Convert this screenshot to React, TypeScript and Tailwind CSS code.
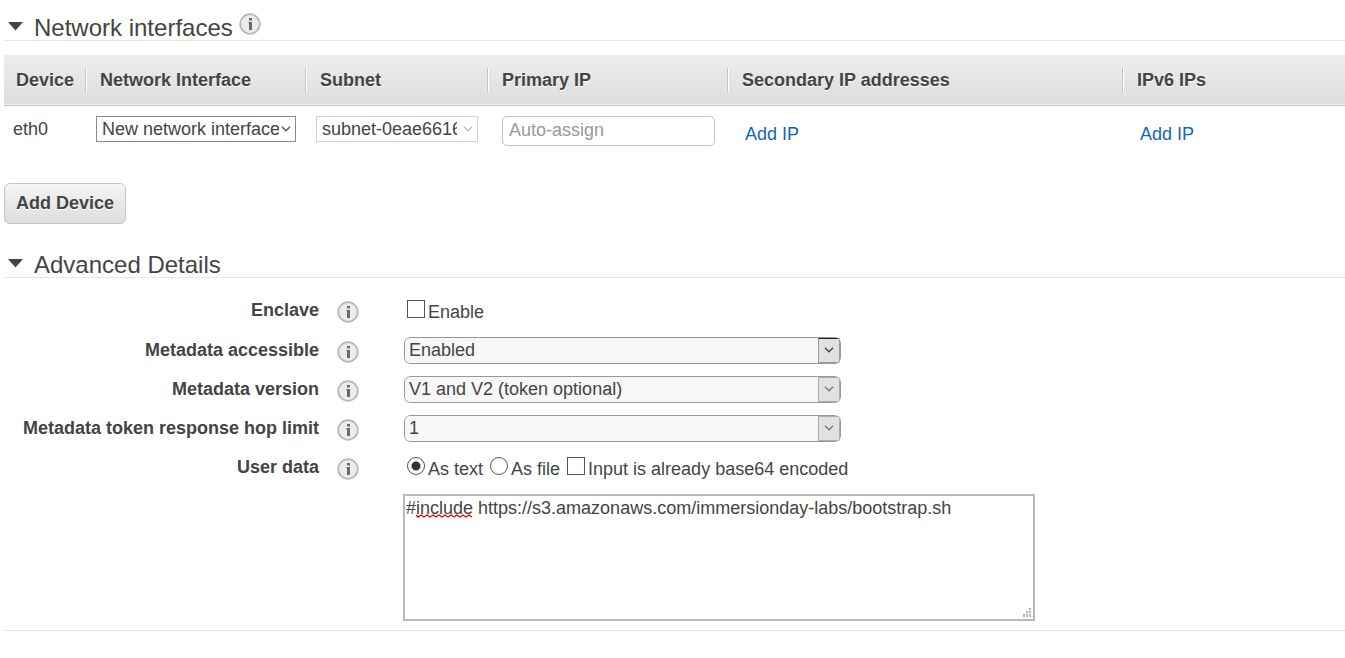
import React, { useState } from 'react';

const InfoIcon: React.FC = () => (
  <svg width="22" height="22" viewBox="0 0 22 22" aria-hidden="true">
    <circle cx="11" cy="11" r="9.8" fill="#ececec" stroke="#b8b8b8" strokeWidth="1.8" />
    <rect x="10" y="5" width="3" height="2.5" fill="#6a6a6a" />
    <path d="M9.4 9H13v8h-3v-6.8h-.6z" fill="#6a6a6a" />
  </svg>
);

const InfoButton: React.FC<{ label: string }> = ({ label }) => (
  <button type="button" aria-label={label} className="block h-[22px] w-[22px] shrink-0">
    <InfoIcon />
  </button>
);

const Chevron: React.FC<{ color: string }> = ({ color }) => (
  <svg width="10" height="6" viewBox="0 0 10 6" fill="none" stroke={color} strokeWidth="1.3" aria-hidden="true">
    <path d="M1 0.8 5 4.8 9 0.8" />
  </svg>
);

interface SectionTitleProps {
  title: string;
  open: boolean;
  info?: boolean;
  onToggle: () => void;
}

const SectionTitle: React.FC<SectionTitleProps> = ({ title, open, info, onToggle }) => (
  <div className="flex h-7 items-start border-b border-[#e8e8e8]">
    <button type="button" aria-expanded={open} onClick={onToggle} className="flex items-start text-2xl leading-[30px]">
      <svg width="30" height="28" viewBox="0 0 30 28" className="shrink-0" aria-hidden="true">
        <path d="M4 9h15l-7.5 8.5z" fill="#444" />
      </svg>
      <h2>{title}</h2>
    </button>
    {info && (
      <div className="ml-[6px]">
        <InfoButton label={`About ${title}`} />
      </div>
    )}
  </div>
);

const columns = [
  { name: 'Network Interface', width: 'w-[220px]' },
  { name: 'Subnet', width: 'w-[182px]' },
  { name: 'Primary IP', width: 'w-[240px]' },
  { name: 'Secondary IP addresses', width: 'w-[395px]' },
  { name: 'IPv6 IPs', width: '' },
];

const InterfacesTable: React.FC = () => (
  <table className="w-full table-fixed border-collapse text-left">
    <thead>
      <tr className="h-[50px] border-b border-[#c4c4c4] bg-linear-to-b from-[#eeeeee] to-[#dddddd] [text-shadow:0_1px_0_#fff]">
        <th className="w-[81px] p-0 pl-3">Device</th>
        {columns.map((col) => (
          <th key={col.name} className={`p-0 ${col.width}`}>
            <div className="border-l border-[#c4c4c4]">
              <div className="border-l border-white pl-[13px] leading-6">{col.name}</div>
            </div>
          </th>
        ))}
      </tr>
    </thead>
    <tbody>
      <tr className="align-top">
        <td className="p-0 pt-[11px] pl-[9px] leading-6">eth0</td>
        <td className="p-0 pt-[10px] pl-[11px]">
          <div className="relative w-[200px]">
            <select aria-label="Network interface" className="block h-[26px] w-full appearance-none border border-[#888] bg-white pr-4 pl-[5px]">
              <option>New network interface</option>
            </select>
            <span className="pointer-events-none absolute top-[10px] right-[5px]">
              <Chevron color="#555" />
            </span>
          </div>
        </td>
        <td className="p-0 pt-[10px] pl-[11px]">
          <div className="relative w-[162px]">
            <select aria-label="Subnet" className="block h-[26px] w-full appearance-none border border-[#d2d2d2] bg-white pr-5 pl-[5px]">
              <option>subnet-0eae6616</option>
            </select>
            <span className="pointer-events-none absolute top-[10px] right-[5px]">
              <Chevron color="#bbb" />
            </span>
          </div>
        </td>
        <td className="p-0 pt-[10px] pl-[15px]">
          <input
            aria-label="Primary IP"
            placeholder="Auto-assign"
            className="block h-[30px] w-[213px] rounded-[5px] border border-[#c4c4c4] px-[6px] placeholder:text-[#999]"
          />
        </td>
        <td className="p-0 pt-4 pl-[18px] leading-6">
          <a href="#secondary-ip" className="text-[#1166bb]">Add IP</a>
        </td>
        <td className="p-0 pt-4 pl-[18px] leading-6">
          <a href="#ipv6-ip" className="text-[#1166bb]">Add IP</a>
        </td>
      </tr>
    </tbody>
  </table>
);

interface FieldProps {
  label: string;
  htmlFor?: string;
  children: React.ReactNode;
}

const Field: React.FC<FieldProps> = ({ label, htmlFor, children }) => (
  <div className="flex min-h-[27px] items-start">
    <label htmlFor={htmlFor} className="w-[315px] shrink-0 text-right font-bold leading-[27px]">{label}</label>
    <div className="mt-1 ml-[18px]">
      <InfoButton label={`About ${label}`} />
    </div>
    <div className="ml-[44px] min-w-0 flex-1">{children}</div>
  </div>
);

interface SelectFieldProps {
  id: string;
  label: string;
  options: string[];
  active?: boolean;
}

const SelectField: React.FC<SelectFieldProps> = ({ id, label, options, active }) => (
  <Field label={label} htmlFor={id}>
    <div className="relative ml-px w-[437px] overflow-hidden rounded-[6px]">
      <select id={id} className="block h-[27px] w-full appearance-none rounded-[6px] border border-[#999] bg-[#f7f7f7] pr-6 pl-1">
        {options.map((o) => (
          <option key={o}>{o}</option>
        ))}
      </select>
      <span
        className={`pointer-events-none absolute inset-y-px right-px flex w-[22px] items-center justify-center border bg-[#e1e1e1] ${
          active ? 'border-[#999] border-t-[#222]' : 'border-[#adadad]'
        }`}
      >
        <Chevron color={active ? '#444' : '#777'} />
      </span>
    </div>
  </Field>
);

const checkboxClass = 'mt-[3px] h-[18px] w-[18px] shrink-0 appearance-none border border-[#555] bg-white checked:bg-[#555]';
const radioClass =
  'mt-[3px] h-[18px] w-[18px] shrink-0 appearance-none rounded-full border border-[#555] bg-white checked:bg-[radial-gradient(circle,#333_4px,#fff_5px)]';

const AdvancedDetails: React.FC = () => {
  const [source, setSource] = useState('text');
  const [userData, setUserData] = useState('#include https://s3.amazonaws.com/immersionday-labs/bootstrap.sh');

  return (
    <div className="flex flex-col gap-3 pt-[19px]">
      <Field label="Enclave" htmlFor="enclave">
        <div className="flex h-7 pl-1">
          <input id="enclave" type="checkbox" className={checkboxClass} />
          <label htmlFor="enclave" className="ml-[3px] leading-[30px]">Enable</label>
        </div>
      </Field>
      <SelectField id="metadata-accessible" label="Metadata accessible" options={['Enabled', 'Disabled']} active />
      <SelectField id="metadata-version" label="Metadata version" options={['V1 and V2 (token optional)', 'V2 (token required)']} />
      <SelectField id="hop-limit" label="Metadata token response hop limit" options={['1', '2', '3']} />
      <Field label="User data" htmlFor="user-data">
        <div className="flex pl-1 leading-[30px]">
          <input
            id="as-text"
            type="radio"
            name="source"
            checked={source === 'text'}
            onChange={() => setSource('text')}
            className={radioClass}
          />
          <label htmlFor="as-text" className="ml-[3px]">As text</label>
          <input
            id="as-file"
            type="radio"
            name="source"
            checked={source === 'file'}
            onChange={() => setSource('file')}
            className={`ml-[7px] ${radioClass}`}
          />
          <label htmlFor="as-file" className="ml-[3px]">As file</label>
          <input id="base64" type="checkbox" className={`ml-[7px] ${checkboxClass}`} />
          <label htmlFor="base64" className="ml-[3px]">Input is already base64 encoded</label>
        </div>
        <div className="relative mt-[10px] w-[632px]">
          <textarea
            id="user-data"
            spellCheck={false}
            value={userData}
            onChange={(e) => setUserData(e.target.value)}
            className="block h-[127px] w-full resize-none border-2 border-[#b9b9b9] px-px leading-6"
          />
          {/* spelling mark under "include" */}
          <svg width="56" height="4" viewBox="0 0 56 4" className="pointer-events-none absolute top-5 left-[13px]" fill="none" stroke="#e00" strokeWidth="1.4" aria-hidden="true">
            <path d="M0 1 2 3 5 1 8 3 11 1 14 3 17 1 20 3 23 1 26 3 29 1 32 3 35 1 38 3 41 1 44 3 47 1 50 3 53 1 56 3" />
          </svg>
          <svg width="10" height="10" viewBox="0 0 10 10" className="pointer-events-none absolute right-[3px] bottom-[3px]" fill="#b5b5b5" aria-hidden="true">
            <path d="M7 0h2v2H7zM4 3h2v2H4zM7 3h2v2H7zM1 6h2v3H1zM4 6h2v3H4zM7 6h2v3H7z" />
          </svg>
        </div>
      </Field>
    </div>
  );
};

export default function App() {
  const [showInterfaces, setShowInterfaces] = useState(true);
  const [showAdvanced, setShowAdvanced] = useState(true);

  return (
    <main className="bg-white pt-[13px] pl-1 font-['Liberation_Sans',Arial,sans-serif] text-lg leading-6 text-[#444]">
      <section>
        <SectionTitle title="Network interfaces" info open={showInterfaces} onToggle={() => setShowInterfaces(!showInterfaces)} />
        {showInterfaces && (
          <div className="pt-[14px]">
            <InterfacesTable />
            <button
              type="button"
              className="mt-[37px] block h-[41px] rounded-[6px] border border-[#c4c4c4] bg-linear-to-b from-[#f5f5f5] to-[#dddddd] px-[11px] font-bold [text-shadow:0_1px_0_#fff]"
            >
              Add Device
            </button>
          </div>
        )}
      </section>
      <section className="mt-[26px] border-b border-[#e8e8e8] pb-[9px]">
        <SectionTitle title="Advanced Details" open={showAdvanced} onToggle={() => setShowAdvanced(!showAdvanced)} />
        {showAdvanced && <AdvancedDetails />}
      </section>
    </main>
  );
}
